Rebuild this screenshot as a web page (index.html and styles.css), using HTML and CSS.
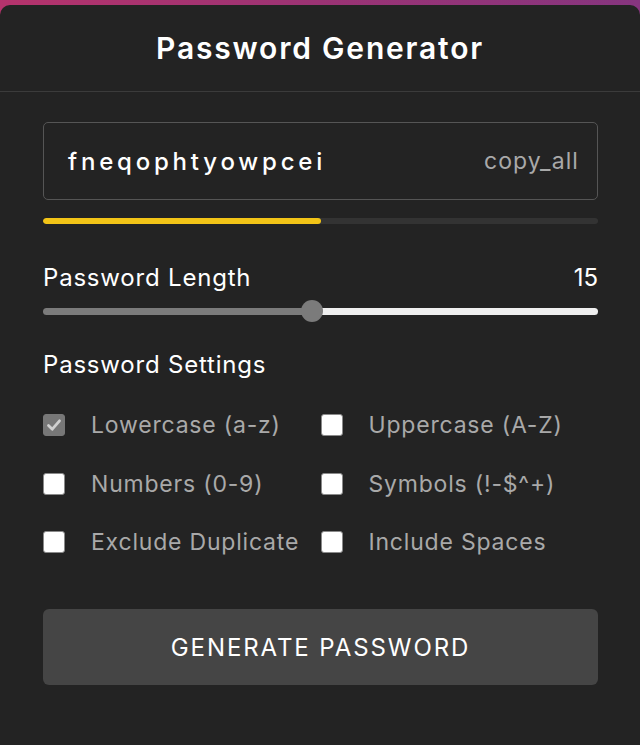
FILE: index.html
```html
<!DOCTYPE html>
<html>
<head>
<meta charset="utf-8">
<link rel="stylesheet" href="styles.css">
</head>
<body>
<div class="card">
  <header class="head"><h1 class="title">Password Generator</h1></header>
  <main class="content">
    <div class="pw-box">
      <span class="pw">fneqophtyowpcei</span>
      <span class="copy">copy_all</span>
    </div>
    <div class="strength"><div class="strength-fill" style="width:50%"></div></div>
    <div class="len-row"><span>Password Length</span><span class="num">15</span></div>
    <div class="slider">
      <div class="slider-left" style="width:48.5%"></div>
      <div class="slider-thumb"></div>
      <div class="slider-right"></div>
    </div>
    <div class="settings-title">Password Settings</div>
    <div class="options">
      <label class="opt"><span class="box checked"><svg viewBox="0 0 22 22" width="22" height="22"><path d="M5.5 11.5 L9.3 15.2 L16.5 6.8" fill="none" stroke="#d0d0d0" stroke-width="2.8" stroke-linecap="round" stroke-linejoin="round"/></svg></span><span class="lbl">Lowercase (a-z)</span></label>
      <label class="opt"><span class="box"></span><span class="lbl">Uppercase (A-Z)</span></label>
      <label class="opt"><span class="box"></span><span class="lbl">Numbers (0-9)</span></label>
      <label class="opt"><span class="box"></span><span class="lbl">Symbols (!-$^+)</span></label>
      <label class="opt"><span class="box"></span><span class="lbl">Exclude Duplicate</span></label>
      <label class="opt"><span class="box"></span><span class="lbl">Include Spaces</span></label>
    </div>
    <button class="gen">GENERATE PASSWORD</button>
  </main>
</div>
</body>
</html>
```
FILE: styles.css
```css
html, body {
  margin: 0;
  padding: 0;
  height: 100%;
}
body {
  background: linear-gradient(90deg, #b5336c 0%, #9b3374 50%, #86357f 100%);
  font-family: "Inter", "Open Sans", sans-serif;
  overflow: hidden;
}
.card {
  margin-top: 5px;
  background: #232323;
  border-radius: 10px 10px 0 0;
  height: 760px;
}
.head {
  height: 86px;
  border-bottom: 1px solid #3b3b3b;
  display: flex;
  align-items: center;
  justify-content: center;
}
.title {
  margin: 0;
  color: #fff;
  font-size: 30px;
  font-weight: 600;
  letter-spacing: 1.8px;
}
.content {
  padding: 30px 42px 0 43px;
}
.pw-box {
  height: 78px;
  box-sizing: border-box;
  border: 1px solid #555;
  border-radius: 5px;
  display: flex;
  align-items: center;
  justify-content: space-between;
  padding: 0 18px 0 24px;
}
.pw {
  color: #fff;
  font-size: 24px;
  font-weight: 500;
  letter-spacing: 3.8px;
}
.copy {
  color: #a9a9a9;
  font-size: 23px;
  letter-spacing: 1.1px;
}
.strength {
  margin-top: 18px;
  height: 6px;
  border-radius: 3px;
  background: #333;
  overflow: hidden;
}
.strength-fill {
  height: 100%;
  background: #f2c417;
  border-radius: 3px;
}
.len-row {
  margin-top: 39px;
  display: flex;
  justify-content: space-between;
  color: #fff;
  font-size: 24px;
  letter-spacing: 0.8px;
  line-height: 30px;
}
.num {
  letter-spacing: 0;
}
.slider {
  margin-top: 7px;
  height: 22px;
  display: flex;
  align-items: center;
}
.slider-left {
  height: 7px;
  background: #7b7b7b;
  border-radius: 4px 0 0 4px;
  margin-right: -11px;
}
.slider-thumb {
  width: 22px;
  height: 22px;
  border-radius: 50%;
  background: #7b7b7b;
  flex: none;
  position: relative;
  z-index: 1;
}
.slider-right {
  flex: 1;
  height: 7px;
  background: #efefef;
  border-radius: 0 4px 4px 0;
  margin-left: -11px;
}
.settings-title {
  margin-top: 28px;
  color: #fff;
  font-size: 24px;
  letter-spacing: 0.8px;
  line-height: 30px;
}
.options {
  margin-top: 16px;
  display: grid;
  grid-template-columns: 1fr 1fr;
  grid-auto-rows: 58.5px;
}
.opt {
  display: flex;
  align-items: center;
}
.box {
  width: 22px;
  height: 22px;
  box-sizing: border-box;
  background: #fff;
  border: 1px solid #8a8a8a;
  border-radius: 3px;
  flex: none;
}
.box.checked {
  background: #777;
  border-color: #777;
}
.box.checked svg {
  display: block;
  margin: -1px;
}
.lbl {
  margin-left: 26px;
  color: #a9a9a9;
  font-size: 23px;
  letter-spacing: 0.8px;
  white-space: nowrap;
}
.gen {
  margin-top: 37.5px;
  width: 100%;
  height: 76px;
  border: none;
  border-radius: 6px;
  background: #454545;
  color: #fff;
  font-family: inherit;
  font-size: 24px;
  letter-spacing: 1.9px;
}
```
